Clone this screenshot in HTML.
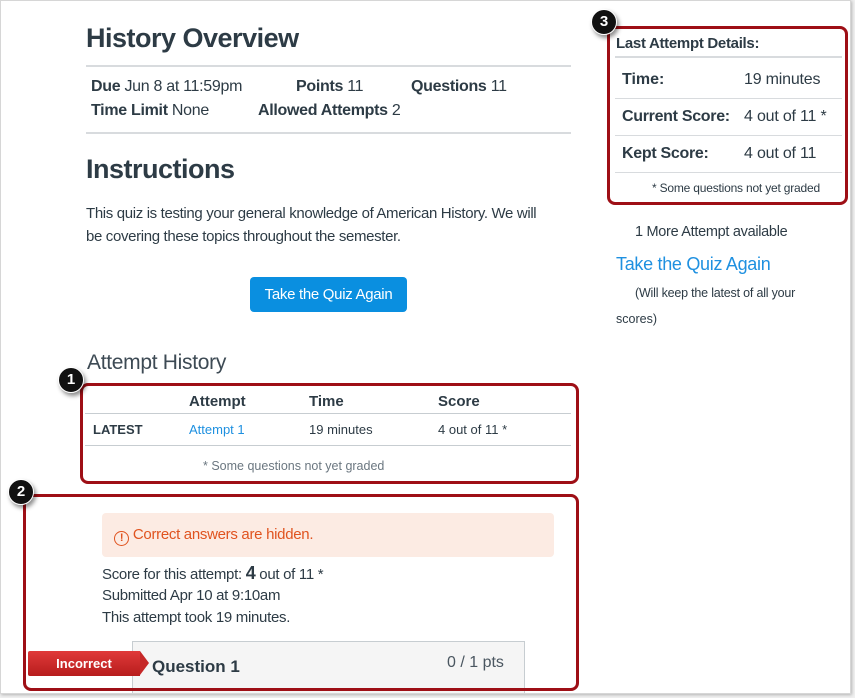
<!DOCTYPE html>
<html><head><meta charset="utf-8"><style>
*{margin:0;padding:0;box-sizing:border-box}
body{width:855px;height:698px;background:#f0f0f0;font-family:"Liberation Sans",sans-serif;color:#2d3b45;position:relative;overflow:hidden}
.page{position:absolute;left:0;top:0;width:851px;height:694px;background:#fff;border:1px solid #d6d6d6;box-shadow:1px 1px 3px rgba(0,0,0,.25);overflow:hidden}
.a{position:absolute;white-space:nowrap}
.hr{position:absolute;height:2px;background:#d8dbde}
.red{position:absolute;border:3px solid #9e0f16;border-radius:8px}
.badge{position:absolute;width:26px;height:26px;border-radius:50%;background:#111;color:#fff;font-size:15px;font-weight:bold;text-align:center;line-height:24px;box-shadow:2px 3px 4px rgba(0,0,0,.45);border:1px solid #fff}
b{font-weight:bold}
.f16{font-size:16px;letter-spacing:-.3px}
</style></head><body><div class="page">
<div class="a" style="left:85px;top:22px;font-size:27px;font-weight:bold;letter-spacing:-.5px">History Overview</div>
<div class="hr" style="left:85px;top:64px;width:485px"></div>
<div class="a f16" style="left:90px;top:77px"><b>Due</b> Jun 8 at 11:59pm</div>
<div class="a f16" style="left:295px;top:77px"><b>Points</b> 11</div>
<div class="a f16" style="left:410px;top:77px"><b>Questions</b> 11</div>
<div class="a f16" style="left:90px;top:101px"><b>Time Limit</b> None</div>
<div class="a f16" style="left:257px;top:101px"><b>Allowed Attempts</b> 2</div>
<div class="hr" style="left:85px;top:131px;width:485px"></div>
<div class="a" style="left:85px;top:153px;font-size:27px;font-weight:bold;letter-spacing:-.5px">Instructions</div>
<div class="a" style="left:85px;top:201px;font-size:15px;letter-spacing:-.35px;line-height:23px">This quiz is testing your general knowledge of American History. We will<br>be covering these topics throughout the semester.</div>
<div class="a" style="left:249px;top:276px;width:157px;height:35px;background:#0a8fe0;border-radius:4px;color:#fff;font-size:15px;letter-spacing:-.3px;text-align:center;line-height:35px">Take the Quiz Again</div>
<div class="a" style="left:86px;top:350px;font-size:21px;color:#3d4a54;letter-spacing:-.3px">Attempt History</div>

<div class="a" style="left:188px;top:392px;font-size:15px;font-weight:bold">Attempt</div>
<div class="a" style="left:308px;top:392px;font-size:15px;font-weight:bold">Time</div>
<div class="a" style="left:437px;top:392px;font-size:15px;font-weight:bold">Score</div>
<div class="hr" style="left:84px;top:412px;width:486px;height:1px;background:#c7cdd1"></div>
<div class="a" style="left:92px;top:421px;font-size:13px;font-weight:bold">LATEST</div>
<div class="a" style="left:188px;top:421px;font-size:13px;color:#1e90e0">Attempt 1</div>
<div class="a" style="left:308px;top:421px;font-size:13px">19 minutes</div>
<div class="a" style="left:437px;top:421px;font-size:13px">4 out of 11 *</div>
<div class="hr" style="left:84px;top:444px;width:486px;height:1px;background:#c7cdd1"></div>
<div class="a" style="left:202px;top:458px;font-size:12.5px;color:#6b7780">* Some questions not yet graded</div>
<div class="red" style="left:79px;top:382px;width:499px;height:101px"></div>
<div class="badge" style="left:57px;top:366px">1</div>

<div class="a" style="left:101px;top:512px;width:452px;height:44px;background:#fcebe3;border-radius:4px"></div>
<div class="a" style="left:113px;top:525px;font-size:15px;color:#e0531f;letter-spacing:-.3px"><span style="display:inline-block;width:15px;height:15px;border:1.5px solid #e0531f;border-radius:50%;font-size:11px;font-weight:bold;text-align:center;line-height:12px;vertical-align:-2px">!</span> Correct answers are hidden.</div>
<div class="a" style="left:101px;top:562px;font-size:15px;letter-spacing:-.3px">Score for this attempt: <span style="font-size:18px;font-weight:bold">4</span> out of 11 *</div>
<div class="a" style="left:101px;top:586px;font-size:15px;letter-spacing:-.3px">Submitted Apr 10 at 9:10am</div>
<div class="a" style="left:101px;top:608px;font-size:15px;letter-spacing:-.3px">This attempt took 19 minutes.</div>
<div class="a" style="left:131px;top:640px;width:393px;height:60px;background:#f5f5f5;border:1px solid #c7cdd1"></div>
<div class="a" style="left:151px;top:656px;font-size:17px;font-weight:bold">Question 1</div>
<div class="a" style="left:446px;top:653px;font-size:16px;color:#4a5660">0 / 1 pts</div>
<div class="a" style="left:27px;top:650px;width:112px;height:25px;background:linear-gradient(#e03a3a,#b71c1c);color:#fff;font-size:13px;font-weight:bold;text-align:center;line-height:25px;border-radius:2px 0 0 2px">Incorrect</div>
<div class="a" style="left:139px;top:650px;width:0;height:0;border-top:12.5px solid transparent;border-bottom:12.5px solid transparent;border-left:9px solid #c62828"></div>
<div class="red" style="left:22px;top:493px;width:556px;height:197px"></div>
<div class="badge" style="left:7px;top:478px">2</div>

<div class="a" style="left:615px;top:34px;font-size:15px;font-weight:bold;letter-spacing:-.3px">Last Attempt Details:</div>
<div class="hr" style="left:614px;top:55px;width:227px"></div>
<div class="a" style="left:621px;top:70px;font-size:16px;font-weight:bold">Time:</div>
<div class="a" style="left:743px;top:70px;font-size:16px;letter-spacing:-.2px">19 minutes</div>
<div class="hr" style="left:614px;top:97px;width:227px;height:1px"></div>
<div class="a" style="left:621px;top:107px;font-size:16px;font-weight:bold;letter-spacing:-.3px">Current Score:</div>
<div class="a" style="left:743px;top:107px;font-size:16px;letter-spacing:-.2px">4 out of 11 *</div>
<div class="hr" style="left:614px;top:134px;width:227px;height:1px"></div>
<div class="a" style="left:621px;top:144px;font-size:16px;font-weight:bold;letter-spacing:-.3px">Kept Score:</div>
<div class="a" style="left:743px;top:144px;font-size:16px;letter-spacing:-.2px">4 out of 11</div>
<div class="hr" style="left:614px;top:171px;width:227px;height:1px"></div>
<div class="a" style="left:651px;top:180px;font-size:12px;letter-spacing:-.2px">* Some questions not yet graded</div>
<div class="red" style="left:606px;top:25px;width:241px;height:179px"></div>
<div class="badge" style="left:590px;top:8px">3</div>

<div class="a" style="left:634px;top:223px;font-size:14.5px;letter-spacing:-.3px">1 More Attempt available</div>
<div class="a" style="left:615px;top:253px;font-size:18px;color:#1e90e0;letter-spacing:-.3px">Take the Quiz Again</div>
<div class="a" style="left:634px;top:285px;font-size:12.5px;letter-spacing:-.2px">(Will keep the latest of all your</div>
<div class="a" style="left:615px;top:311px;font-size:12.5px">scores)</div>
</div></body></html>
